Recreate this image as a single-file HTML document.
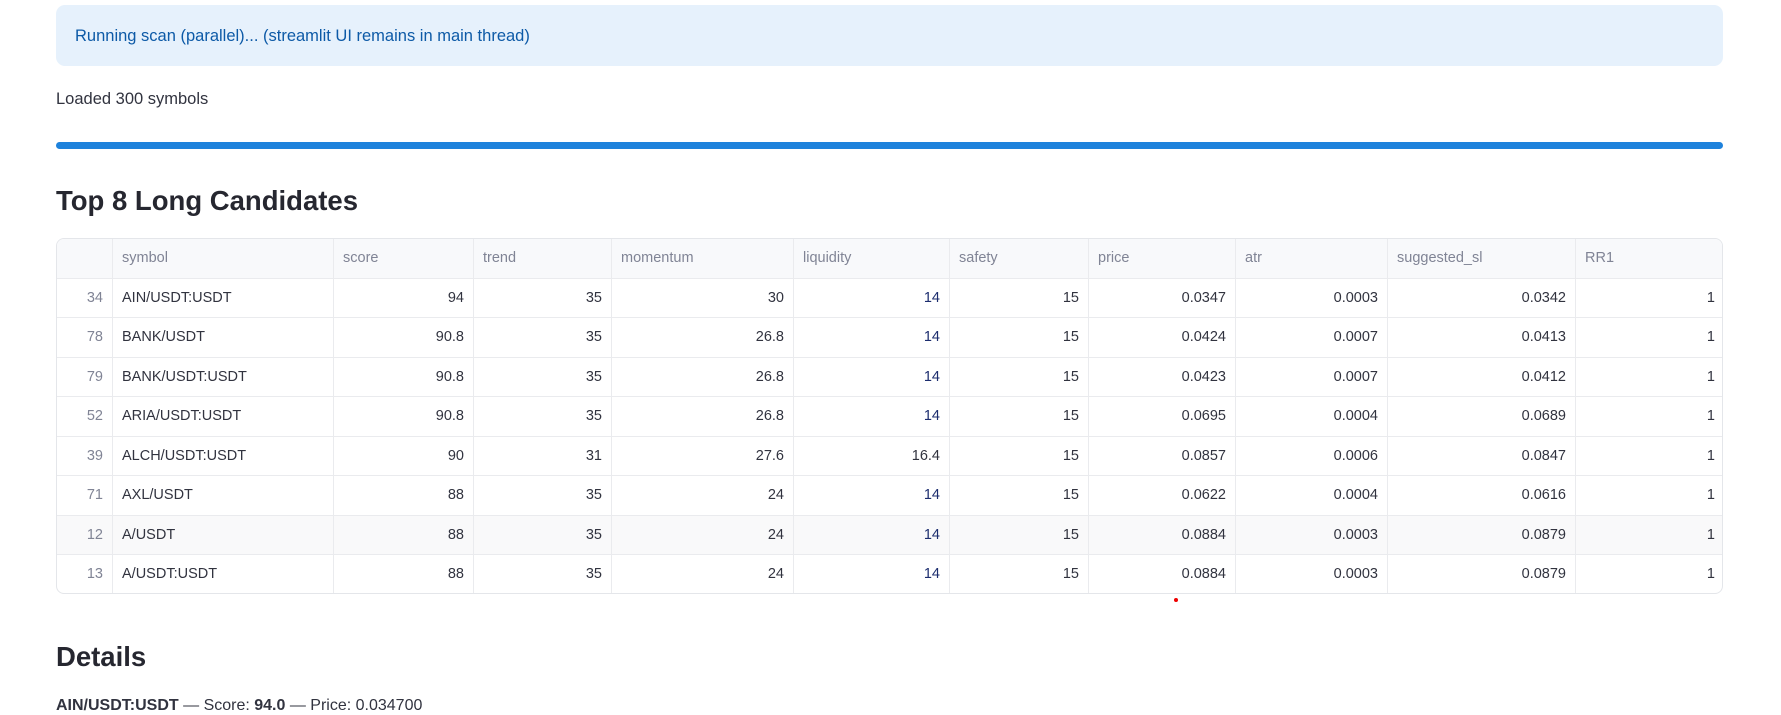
<!DOCTYPE html>
<html><head><meta charset="utf-8"><style>
*{margin:0;padding:0;box-sizing:border-box}
body{width:1781px;height:712px;background:#fff;font-family:"Liberation Sans",sans-serif;color:#31333f;position:relative;overflow:hidden}
.alert{position:absolute;left:56px;top:5px;width:1667px;height:61px;background:#e6f1fc;border-radius:9px;color:#0d5aa7;font-size:16.5px;line-height:63px;padding-left:19px}
.loaded{position:absolute;left:56px;top:90px;font-size:16.5px}
.bar{position:absolute;left:56px;top:142px;width:1667px;height:7px;background:#1e82dc;border-radius:4px}
h2{position:absolute;left:56px;font-size:27.5px;font-weight:bold;color:#262730}
.tbl{position:absolute;left:56px;top:238px;width:1667px;height:356px;border:1px solid #e4e6ea;border-radius:8px;overflow:hidden;font-size:14.5px}
.row{position:absolute;left:0;width:100%;height:39.5px;border-bottom:1px solid #eaebee}
.c{position:absolute;top:0;height:100%;line-height:39px;border-right:1px solid #eaebee;padding:0 9px;white-space:nowrap}
.hd{background:#f8f9fb;color:#808495}
.r{text-align:right}
.idx{color:#808495}
.liq{color:#1c2d6e}
.det{position:absolute;left:56px;top:697px;font-size:16px}
</style></head><body>
<div class="alert">Running scan (parallel)... (streamlit UI remains in main thread)</div>
<div class="loaded">Loaded 300 symbols</div>
<div class="bar"></div>
<h2 style="top:185px">Top 8 Long Candidates</h2>
<div class="tbl" id="t"></div>
<div style="position:absolute;left:1174px;top:598px;width:4px;height:4px;border-radius:50%;background:#e00"></div>
<h2 style="top:641px">Details</h2>
<div class="det"><b>AIN/USDT:USDT</b> — Score: <b>94.0</b> — Price: 0.034700</div>
<script>
var b=[0,56,277,417,555,737,893,1032,1179,1331,1519,1667];
var hd=["","symbol","score","trend","momentum","liquidity","safety","price","atr","suggested_sl","RR1"];
var d=[["34","AIN/USDT:USDT","94","35","30","14","15","0.0347","0.0003","0.0342","1"],
["78","BANK/USDT","90.8","35","26.8","14","15","0.0424","0.0007","0.0413","1"],
["79","BANK/USDT:USDT","90.8","35","26.8","14","15","0.0423","0.0007","0.0412","1"],
["52","ARIA/USDT:USDT","90.8","35","26.8","14","15","0.0695","0.0004","0.0689","1"],
["39","ALCH/USDT:USDT","90","31","27.6","16.4","15","0.0857","0.0006","0.0847","1"],
["71","AXL/USDT","88","35","24","14","15","0.0622","0.0004","0.0616","1"],
["12","A/USDT","88","35","24","14","15","0.0884","0.0003","0.0879","1"],
["13","A/USDT:USDT","88","35","24","14","15","0.0884","0.0003","0.0879","1"]];
var h="";
function row(cells,top,cls,bg){var s='<div class="row" style="top:'+top+'px;'+(bg?'background:'+bg:'')+'">';
for(var i=0;i<11;i++){var k="c "+cls;if(cls!="hd"){if(i!=1)k+=" r";if(i==0)k+=" idx";if(i==5&&cells[i]=="14")k+=" liq";}
s+='<div class="'+k+'" style="left:'+b[i]+'px;width:'+(b[i+1]-b[i])+'px;'+(i==10?'border-right:0':'')+'">'+cells[i]+'</div>';}
return s+'</div>';}
h+=row(hd,0,"hd");
for(var j=0;j<8;j++)h+=row(d[j],39.5*(j+1),"",j==6?"#f9f9fa":"");
document.getElementById("t").innerHTML=h;
</script>
</body></html>
